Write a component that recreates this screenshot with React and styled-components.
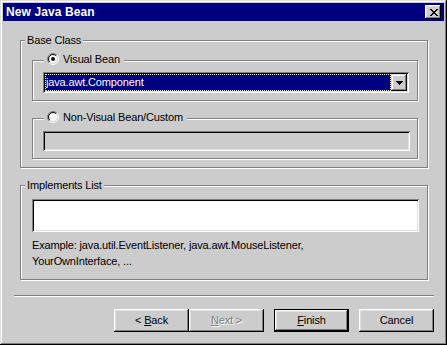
import React from 'react';
import styled, { createGlobalStyle } from 'styled-components';

const FACE = '#cccccc';

const Global = createGlobalStyle`
  html, body { margin: 0; padding: 0; background: ${FACE}; }
  body { font-family: "Liberation Sans", Arial, sans-serif; font-size: 11px; color: #000; letter-spacing: -0.15px; }
  * { box-sizing: border-box; }
`;

const Window = styled.div`
  width: 447px;
  height: 345px;
  padding: 3px;
  background: ${FACE};
  box-shadow: inset -1px -1px 0 #000, inset 1px 1px 0 #dfdfdf,
    inset -2px -2px 0 #808080, inset 2px 2px 0 #fff;
  display: flex;
  flex-direction: column;
`;

const TitleBar = styled.div`
  height: 18px;
  background: #000080;
  color: #fff;
  display: flex;
  align-items: center;
  justify-content: space-between;
  padding: 0 3px 0 3px;
`;

const TitleText = styled.span`
  font-weight: bold;
  font-size: 12px;
  line-height: 14px;
  letter-spacing: 0.1px;
`;

const CloseButton = styled.div`
  width: 16px;
  height: 14px;
  background: ${FACE};
  box-shadow: inset -1px -1px 0 #000, inset 1px 1px 0 #fff,
    inset -2px -2px 0 #808080, inset 2px 2px 0 #dfdfdf;
  display: flex;
  align-items: center;
  justify-content: center;
  padding-left: 1px;
`;

const Body = styled.div`
  flex: 1;
  display: flex;
  flex-direction: column;
  padding: 19px 16px 0 17px;
`;

const Group = styled.div`
  position: relative;
  height: ${(p) => p.$h}px;
  width: ${(p) => (p.$w ? `${p.$w}px` : 'auto')};
  margin-top: ${(p) => p.$mt || 0}px;
  padding: ${(p) => p.$pad};
  border: 1px solid #808080;
  box-shadow: 1px 1px 0 #fff, inset 1px 1px 0 #fff;
  display: flex;
  flex-direction: column;
`;

const Legend = styled.div`
  position: absolute;
  top: -7px;
  left: 4px;
  padding: 0 2px;
  background: ${FACE};
  line-height: 13px;
  white-space: nowrap;
`;

const RadioLegend = styled.div`
  position: absolute;
  top: -8px;
  left: 11px;
  height: 12px;
  padding: 0 4px 0 3px;
  background: ${FACE};
  display: flex;
  align-items: flex-start;
  gap: 4px;
  white-space: nowrap;
`;

const RadioLabel = styled.span`
  line-height: 13px;
`;

const sunken = `
  box-shadow: inset 1px 1px 0 #808080, inset -1px -1px 0 #fff,
    inset 2px 2px 0 #000, inset -2px -2px 0 #dfdfdf;
`;

const Combo = styled.div`
  width: 366px;
  height: 21px;
  padding: 2px;
  background: #fff;
  display: flex;
  ${sunken}
`;

const Selection = styled.div`
  flex: 1;
  background: #000080;
  color: #fff;
  border: 1px dotted #ffff9a;
  line-height: 15px;
  white-space: nowrap;
  overflow: hidden;
`;

const DropButton = styled.div`
  width: 16px;
  height: 17px;
  background: ${FACE};
  box-shadow: inset -1px -1px 0 #000, inset 1px 1px 0 #dfdfdf,
    inset -2px -2px 0 #808080, inset 2px 2px 0 #fff;
  display: flex;
  align-items: center;
  justify-content: center;
`;

const TextField = styled.div`
  width: ${(p) => p.$w}px;
  height: ${(p) => p.$h}px;
  background: ${(p) => (p.$disabled ? FACE : '#fff')};
  ${sunken}
`;

const Hint = styled.div`
  margin-top: 5px;
  line-height: 16px;
`;

const Separator = styled.div`
  margin: 15px -6px 0 -6px;
  height: 2px;
  border-top: 1px solid #808080;
  border-bottom: 1px solid #fff;
`;

const ButtonRow = styled.div`
  margin: 12px -6px 0 0;
  display: flex;
  justify-content: flex-end;
`;

const Button = styled.div`
  width: 75px;
  height: 23px;
  margin-left: ${(p) => p.$ml || 0}px;
  background: ${FACE};
  display: flex;
  align-items: center;
  justify-content: center;
  padding-bottom: 1px;
  line-height: 13px;
  color: ${(p) => (p.$disabled ? '#808080' : '#000')};
  text-shadow: ${(p) => (p.$disabled ? '1px 1px 0 #fff' : 'none')};
  border: ${(p) => (p.$default ? '1px solid #000' : 'none')};
  box-shadow: inset -1px -1px 0 #000, inset 1px 1px 0 #fff,
    inset -2px -2px 0 #808080, inset 2px 2px 0 #dfdfdf;
  white-space: pre;
`;

const Radio = ({ checked }) => {
  const c = 6;
  const arc = (r) => {
    const d = r * Math.SQRT1_2;
    return {
      tl: `M ${c - d} ${c + d} A ${r} ${r} 0 0 1 ${c + d} ${c - d}`,
      br: `M ${c + d} ${c - d} A ${r} ${r} 0 0 1 ${c - d} ${c + d}`,
    };
  };
  const o = arc(5.5);
  const i = arc(4.5);
  return (
    <svg width="12" height="12" viewBox="0 0 12 12" style={{ flex: 'none' }}>
      <circle cx="6" cy="6" r="4" fill="#fff" />
      <path d={o.tl} stroke="#808080" strokeWidth="1" fill="none" />
      <path d={o.br} stroke="#fff" strokeWidth="1" fill="none" />
      <path d={i.tl} stroke="#000" strokeWidth="1" fill="none" />
      <path d={i.br} stroke="#dfdfdf" strokeWidth="1" fill="none" />
      {checked && <circle cx="6" cy="6" r="2" fill="#000" />}
    </svg>
  );
};

const CloseGlyph = () => {
  const rows = [
    [0, 1, 6, 7],
    [1, 2, 5, 6],
    [2, 3, 4, 5],
    [3, 4],
    [2, 3, 4, 5],
    [1, 2, 5, 6],
    [0, 1, 6, 7],
  ];
  return (
    <svg width="8" height="7" viewBox="0 0 8 7" shapeRendering="crispEdges">
      {rows.map((cols, y) =>
        cols.map((x) => <rect key={`${x}-${y}`} x={x} y={y} width="1" height="1" fill="#000" />)
      )}
    </svg>
  );
};

const DownArrow = () => (
  <svg width="7" height="4" viewBox="0 0 7 4" shapeRendering="crispEdges">
    <rect x="0" y="0" width="7" height="1" fill="#000" />
    <rect x="1" y="1" width="5" height="1" fill="#000" />
    <rect x="2" y="2" width="3" height="1" fill="#000" />
    <rect x="3" y="3" width="1" height="1" fill="#000" />
  </svg>
);

export default function App() {
  return (
    <>
      <Global />
      <Window>
        <TitleBar>
          <TitleText>New Java Bean</TitleText>
          <CloseButton>
            <CloseGlyph />
          </CloseButton>
        </TitleBar>
        <Body>
          <Group $h={128} $pad="19px 9px 0 11px">
            <Legend>Base Class</Legend>
            <Group $h={41} $w={386} $pad="11px 8px 0 10px">
              <RadioLegend>
                <Radio checked />
                <RadioLabel>Visual Bean</RadioLabel>
              </RadioLegend>
              <Combo>
                <Selection>java.awt.Component</Selection>
                <DropButton>
                  <DownArrow />
                </DropButton>
              </Combo>
            </Group>
            <Group $h={41} $w={386} $mt={17} $pad="12px 7px 0 10px">
              <RadioLegend>
                <Radio />
                <RadioLabel>Non-Visual Bean/Custom</RadioLabel>
              </RadioLegend>
              <TextField $w={367} $h={20} $disabled />
            </Group>
          </Group>
          <Group $h={95} $mt={17} $pad="13px 8px 0 11px">
            <Legend>Implements List</Legend>
            <TextField $w={387} $h={33} />
            <Hint>
              Example: java.util.EventListener, java.awt.MouseListener,
              <br />
              YourOwnInterface, ...
            </Hint>
          </Group>
          <Separator />
          <ButtonRow>
            <Button>
              {'< '}
              <u>B</u>ack
            </Button>
            <Button $disabled>
              <u>N</u>
              {'ext >'}
            </Button>
            <Button $default $ml={10}>
              <u>F</u>inish
            </Button>
            <Button $ml={10}>Cancel</Button>
          </ButtonRow>
        </Body>
      </Window>
    </>
  );
}
